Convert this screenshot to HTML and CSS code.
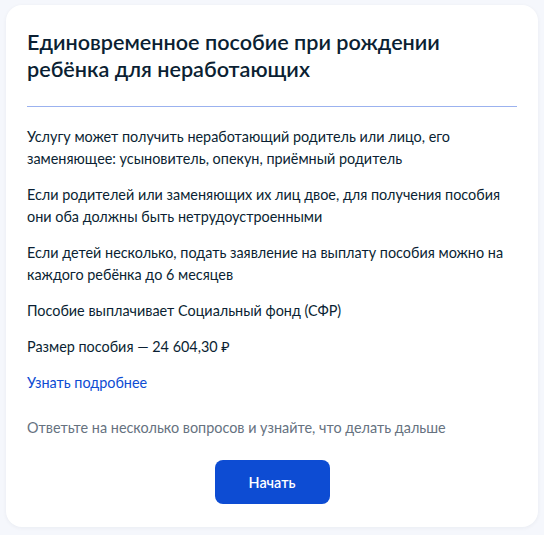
FILE: index.html
```html
<!DOCTYPE html>
<html lang="ru">
<head>
    <meta charset="UTF-8">
    <meta name="viewport" content="width=device-width, initial-scale=1.0">
    <title>Единовременное пособие при рождении ребёнка</title>
    <link rel="stylesheet" href="styles.css">
</head>
<body>
    <div class="card">
        <h1>Единовременное пособие при рождении ребёнка для неработающих</h1>
        <div class="divider"></div>

        <!-- Info -->
        <div class="info">
            <p>Услугу может получить неработающий родитель или лицо, его заменяющее: усыновитель, опекун, приёмный родитель</p>
            <p>Если родителей или заменяющих их лиц двое, для получения пособия они оба должны быть нетрудоустроенными</p>
            <p>Если детей несколько, подать заявление на выплату пособия можно на каждого ребёнка до 6 месяцев</p>
            <p>Пособие выплачивает Социальный фонд (СФР)</p>
            <p>Размер пособия — 24 604,30 ₽</p>
            <p><a href="#" class="more">Узнать подробнее</a></p>
        </div>

        <p class="hint">Ответьте на несколько вопросов и узнайте, что делать дальше</p>

        <div class="actions">
            <button class="start">Начать</button>
        </div>
    </div>
</body>
</html>
```

FILE: styles.css
```css
body {
    font-family: Lato, "Noto Sans", sans-serif;
    background-color: #f5f7fc;
    color: #0b1f33;
    margin: 0;
    padding: 5px 6px 8px;
}
.card {
    background: #fff;
    border-radius: 16px;
    padding: 21px 21px 23px;
    height: 522px;
    box-sizing: border-box;
    box-shadow: 0 1px 4px rgba(11, 31, 51, 0.05);
}
h1 {
    font-size: 21.6px;
    line-height: 27px;
    font-weight: 600;
    margin: 3px 0 0;
}
.divider {
    height: 1px;
    background-color: #9bb2ef;
    margin: 23px 0 19px;
}
.info p {
    font-size: 14.4px;
    line-height: 22px;
    margin: 0 0 14px;
}
.more {
    color: #0d4cd3;
    text-decoration: none;
}
.hint {
    font-size: 14.4px;
    line-height: 22px;
    color: #66727f;
    margin: 23px 0 0;
}
.actions {
    text-align: center;
    margin-top: 21px;
}
.start {
    width: 115px;
    height: 44px;
    border: none;
    border-radius: 8px;
    background-color: #0d4cd3;
    color: #fff;
    font-family: inherit;
    font-size: 14.4px;
    font-weight: 600;
    cursor: pointer;
}
```
